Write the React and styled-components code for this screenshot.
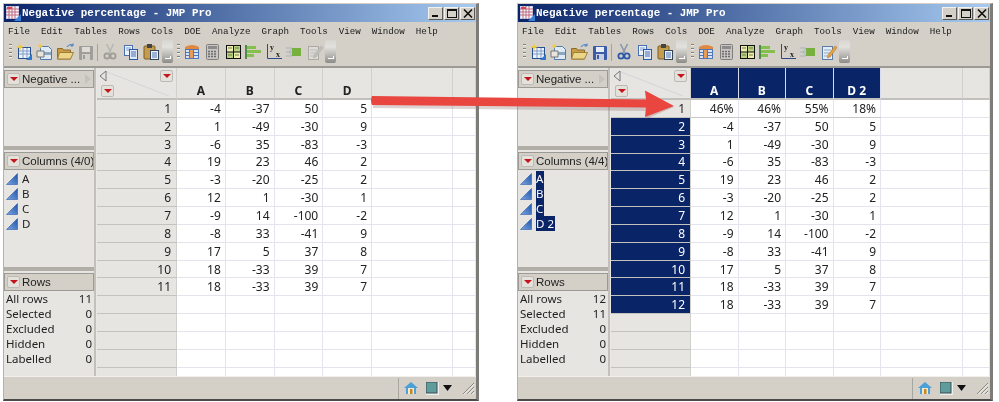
import React from "react";
import styled, { createGlobalStyle } from "styled-components";

const Global = createGlobalStyle`
  html, body { margin: 0; padding: 0; background: #fff; }
  * { box-sizing: border-box; }
  #root { width: 999px; height: 402px; overflow: hidden; }
`;

const Page = styled.div`
  position: relative;
  width: 999px;
  height: 402px;
  padding: 3px 0 0 3px;
  display: flex;
  gap: 38px;
  background: #fff;
  font-family: "Noto Sans", sans-serif;
  color: #222;
`;

const Frame = styled.div`
  width: 476px;
  height: 398px;
  display: flex;
  flex-direction: column;
  background: #d4d0c8;
  border-left: 1px solid #b4b2ac;
  border-right: 3px solid #7e7c78;
  border-bottom: 2px solid #4a4a48;
  border-top: 1px solid #d4d0c8;
  filter: blur(0.25px);
`;

const TitleBar = styled.div`
  height: 18px;
  flex: none;
  display: flex;
  align-items: center;
  padding: 0 1px 0 2px;
  background: linear-gradient(90deg, #0a246a 0%, #a6caf0 100%);
`;

const TitleText = styled.span`
  margin-left: 1px;
  flex: 1;
  font: bold 10.9px/18px "Liberation Mono", monospace;
  color: #fff;
  white-space: pre;
`;

const WinButtons = styled.div`
  display: flex;
  gap: 1px;
`;

const WinButton = styled.div`
  width: 15px;
  height: 13px;
  background: #d4d0c8;
  border: 1px solid;
  border-color: #f4f2ee #5a5a58 #5a5a58 #f4f2ee;
  display: flex;
  align-items: center;
  justify-content: center;
  & svg { display: block; }
`;

const MenuBar = styled.div`
  height: 19px;
  flex: none;
  display: flex;
  align-items: center;
  gap: 11px;
  padding: 1px 0 0 4px;
  font: 9.2px/18px "Liberation Mono", monospace;
  color: #1a1a1a;
`;

const ToolBar = styled.div`
  height: 27px;
  flex: none;
  display: flex;
  align-items: center;
  padding: 0 0 3px 5px;
  border-bottom: 2px solid #9c9a94;
`;

const Grip = styled.div`
  width: 3px;
  height: 16px;
  margin-right: 2px;
  background: repeating-linear-gradient(180deg, #807e78 0 1px, #f2f0ec 1px 2px, transparent 2px 4px);
`;

const ToolIcon = styled.div`
  width: 20.5px;
  height: 18px;
  display: flex;
  justify-content: center;
  opacity: ${(p) => (p.$dim ? 0.42 : 1)};
  filter: ${(p) => (p.$dim ? "grayscale(1)" : "none")};
  & svg { display: block; }
`;

const ToolSep = styled.div`
  width: 1px;
  height: 17px;
  margin: 0 2px 0 1px;
  background: #a5a39d;
`;

const Overflow = styled.div`
  width: 11px;
  height: 23px;
  margin: 0 4px 0 0;
  align-self: flex-end;
  position: relative;
  border-radius: 2px;
  background: linear-gradient(180deg, #d8d6d0 0%, #e2e1de 30%, #b4b2ae 70%, #8d8b88 100%);
  &::after {
    content: "";
    position: absolute;
    left: 3px;
    bottom: 4px;
    width: 5px;
    height: 2px;
    border-bottom: 1px solid #fff;
    border-right: 1px solid #fff;
  }
`;

const Body = styled.div`
  flex: 1;
  min-height: 0;
  display: flex;
`;

const Side = styled.div`
  width: 90px;
  flex: none;
  display: flex;
  flex-direction: column;
  background: #b0aea6;
  gap: 4px;
`;

const Panel = styled.div`
  height: ${(p) => p.$h}px;
  flex: ${(p) => (p.$grow ? 1 : "none")};
  padding-top: 2px;
  background: #e7e5e2;
`;

const PanelHead = styled.div`
  height: 18px;
  display: flex;
  align-items: center;
  gap: 2px;
  padding-left: 2px;
  background: #d4d0c8;
  border: 1px solid #9c9a94;
  font-family: "Liberation Sans", sans-serif;
  font-size: 11.5px;
  line-height: 16px;
  color: #222;
  white-space: nowrap;
  overflow: hidden;
`;

const HeadName = styled.span`
  flex: 1;
`;

const RedBtn = styled.span`
  width: 13px;
  height: 12px;
  flex: none;
  display: inline-flex;
  align-items: center;
  justify-content: center;
  border-radius: 2px;
  background: #e4e1db;
  border: 1px solid #bcbab4;
  &::after {
    content: "";
    border-left: 4px solid transparent;
    border-right: 4px solid transparent;
    border-top: 4px solid #c4141c;
  }
`;

const Chevron = styled.span`
  width: 0;
  height: 0;
  margin-right: 2px;
  border-top: 5px solid transparent;
  border-bottom: 5px solid transparent;
  border-left: 6px solid #c4c2bc;
`;

const ColList = styled.div`
  padding-top: 1px;
  display: flex;
  flex-direction: column;
`;

const ColRow = styled.div`
  height: 15px;
  display: flex;
  align-items: center;
  padding-left: 2px;
  font-size: 11.5px;
  gap: 3px;
  & svg { display: block; flex: none; }
`;

const ColName = styled.span`
  line-height: 15px;
  padding-right: 1px;
  white-space: pre;
  background: ${(p) => (p.$sel ? "#0a2468" : "transparent")};
  color: ${(p) => (p.$sel ? "#fff" : "#222")};
`;

const StatList = styled.div`
  padding: 0 2px;
  display: flex;
  flex-direction: column;
`;

const StatRow = styled.div`
  height: 15px;
  display: flex;
  justify-content: space-between;
  font-size: 11.5px;
  line-height: 15px;
`;

const Splitter = styled.div`
  width: 3px;
  flex: none;
  background: #c2c0b9;
  border-right: 1px solid #e9e8e6;
`;

const TableWrap = styled.div`
  flex: 1;
  min-width: 0;
  overflow: hidden;
  background: #fff;
  display: grid;
  grid-template-columns: 80px repeat(4, ${(p) => p.$col}px) ${(p) => p.$extra}px 1fr;
  grid-template-rows: 32px;
  grid-auto-rows: 17.85px;
`;

const Corner = styled.div`
  position: relative;
  background: #e7e5e2;
  border-right: 1px solid #d2d0cc;
  border-bottom: 2px solid #c2c0bc;
  overflow: hidden;
  & svg { position: absolute; left: 0; top: 0; }
`;

const CornerTop = styled(RedBtn)`
  position: absolute;
  right: 3px;
  top: 2px;
`;

const CornerBottom = styled(RedBtn)`
  position: absolute;
  left: 4px;
  bottom: 1px;
`;

const ColHead = styled.div`
  display: flex;
  align-items: flex-end;
  justify-content: center;
  font-size: 12px;
  font-weight: 700;
  line-height: 14px;
  white-space: pre;
  background: ${(p) => (p.$sel ? "#0a2468" : "#e7e5e2")};
  color: ${(p) => (p.$sel ? "#fff" : "#222")};
  border-right: 1px solid ${(p) => (p.$sel ? "#d8dcec" : "#d2d0cc")};
  border-bottom: 2px solid #c2c0bc;
`;

const RowHead = styled.div`
  display: flex;
  align-items: center;
  justify-content: flex-end;
  padding-right: 5px;
  font-size: 12px;
  background: ${(p) => (p.$sel ? "#0a2468" : "#e7e5e2")};
  color: ${(p) => (p.$sel ? "#fff" : "#222")};
  border-right: 1px solid #d2d0cc;
  border-bottom: 1px solid #c4c2bc;
`;

const Cell = styled.div`
  display: flex;
  align-items: center;
  justify-content: flex-end;
  padding-right: 4px;
  font-size: 12px;
  background: #fff;
  color: #222;
  border-right: 1px solid #e4e4ee;
  border-bottom: 1px solid ${(p) => (p.$strong ? "#c8c8cc" : "#e4e4ee")};
`;

const StatusBar = styled.div`
  height: 23px;
  flex: none;
  display: flex;
  align-items: center;
  justify-content: flex-end;
  gap: 8px;
  padding-right: 1px;
  border-top: 1px solid #f2f0ec;
  & svg { display: block; }
  & svg:nth-of-type(2) { margin-right: -4px; }
`;

const StatusSep = styled.div`
  width: 1px;
  height: 21px;
  margin-right: -3px;
  background: #a8a6a0;
`;

const ArrowLayer = styled.svg`
  position: absolute;
  left: 0;
  top: 0;
  pointer-events: none;
`;

const Min = () => (
  <svg width="10" height="9"><rect x="1" y="6" width="6" height="2" fill="#111" /></svg>
);
const Max = () => (
  <svg width="10" height="9"><rect x="0.5" y="0.5" width="9" height="8" fill="none" stroke="#111" /><rect x="0" y="0" width="10" height="2" fill="#111" /></svg>
);
const Close = () => (
  <svg width="10" height="9"><path d="M1 0.5 L9 8.5 M9 0.5 L1 8.5" stroke="#111" strokeWidth="1.6" /></svg>
);

const AppIcon = () => (
  <svg width="15" height="15" viewBox="0 0 15 15">
    <rect x="0.5" y="0.5" width="12" height="12" fill="#f4f4fa" stroke="#c8d4ec" />
    <path d="M0 3h13M0 6h13M0 9h13M3 0v13M6 0v13M9 0v13" stroke="#c06a80" />
    <rect x="1" y="1" width="5" height="2" fill="#d84848" />
    <path d="M15 8 L8 15 L15 15z" fill="#3a80d8" />
  </svg>
);

const icons = {
  newdata: (
    <>
      <rect x="3.5" y="4.5" width="12" height="11" fill="#eef2fa" stroke="#28508c" />
      <path d="M4 8h11M4 11h11M8 5v10M12 5v10" stroke="#7c9ccc" />
      <path d="M5 0 L6 3 L9 4 L6 5 L5 8 L4 5 L1 4 L4 3z" fill="#f4c83c" />
      <path d="M17 11 L11 17 L17 17z" fill="#2c78cc" />
    </>
  ),
  doc: (
    <>
      <path d="M4.5 3.5h8l3 3v10h-11z" fill="#dfeaf4" stroke="#4c7cac" />
      <rect x="4" y="9" width="11" height="3" fill="#8aa8c4" />
      <path d="M1 8h7v6h-7z" fill="#e8e6dc" stroke="#777" />
      <path d="M4 0 L5 2 L7 3 L5 4 L4 6 L3 4 L1 3 L3 2z" fill="#f0cc50" />
    </>
  ),
  open: (
    <>
      <path d="M1.5 5.5h5l1 1.5h7v9h-13z" fill="#c89c44" stroke="#8c6c2c" />
      <path d="M3.5 9.5h14l-3 6.5h-13z" fill="#ecd488" stroke="#a08038" />
      <path d="M11 4 Q14 0 17 3 M17 3 l-2.5 0 M17 3 l0 -2.4" stroke="#5a86c4" fill="none" strokeWidth="1.2" />
    </>
  ),
  save: (
    <>
      <rect x="2" y="3" width="14" height="14" rx="1" fill="#3c5ca8" />
      <rect x="5" y="4" width="8" height="5" fill="#e8eef8" />
      <rect x="5" y="11" width="8" height="6" fill="#c8d0e0" />
      <rect x="6" y="12" width="2" height="4" fill="#3c5ca8" />
    </>
  ),
  cut: (
    <>
      <path d="M5.5 1 L10 10 M12.5 1 L8 10" stroke="#8896a8" strokeWidth="1.6" fill="none" />
      <circle cx="6" cy="13" r="2.6" fill="none" stroke="#2c5aa8" strokeWidth="1.8" />
      <circle cx="12" cy="13" r="2.6" fill="none" stroke="#2c5aa8" strokeWidth="1.8" />
    </>
  ),
  copy: (
    <>
      <rect x="2.5" y="2.5" width="8" height="10" fill="#eef3fa" stroke="#4a70b4" />
      <path d="M4 5h5M4 7h5" stroke="#7c9ccc" />
      <rect x="7.5" y="6.5" width="8" height="10" fill="#dfe9f8" stroke="#2c58a8" />
      <path d="M9 9h5M9 11h5M9 13h5" stroke="#4a70b4" />
    </>
  ),
  paste: (
    <>
      <rect x="2" y="3" width="11" height="13" rx="1" fill="#c49c4c" stroke="#7c5c24" />
      <rect x="5" y="1" width="5" height="4" fill="#444" />
      <rect x="8.5" y="7.5" width="8" height="9" fill="#eef3fa" stroke="#345" />
      <path d="M10 10h5M10 12h5M10 14h5" stroke="#4a70b4" />
    </>
  ),
  table: (
    <>
      <path d="M2 4 Q9 0 16 4 v3h-14z" fill="#e08840" />
      <rect x="2.5" y="6.5" width="13" height="9" fill="#d8e4f4" stroke="#5078b8" />
      <path d="M3 9.5h12M3 12.5h12M6.5 7v8M10.5 7v8" stroke="#5078b8" />
      <rect x="7" y="7" width="3" height="8" fill="#e89c58" />
    </>
  ),
  calc: (
    <>
      <rect x="3.5" y="1.5" width="12" height="15" rx="1" fill="#c8c6c4" stroke="#807e7c" />
      <rect x="5" y="3" width="9" height="3" fill="#8c8a8a" />
      <path d="M5 8.5h9M5 11h9M5 13.5h9" stroke="#6c6a6a" strokeWidth="1.4" strokeDasharray="2 1" />
    </>
  ),
  grid: (
    <>
      <rect x="2" y="2" width="15" height="14" fill="#111" />
      <rect x="3" y="3" width="6" height="5.5" fill="#f0ecb0" />
      <rect x="10" y="3" width="6" height="5.5" fill="#b8d080" />
      <rect x="3" y="9.5" width="6" height="5.5" fill="#b8d080" />
      <rect x="10" y="9.5" width="6" height="5.5" fill="#f0ecb0" />
      <path d="M4 5h4M11 5h4M4 12h4M11 12h4" stroke="#668040" />
    </>
  ),
  bars: (
    <>
      <rect x="1" y="2" width="2" height="14" fill="#4c8c4c" />
      <rect x="3" y="3" width="9" height="3" fill="#86c04c" />
      <rect x="3" y="7" width="14" height="3" fill="#86c04c" />
      <rect x="3" y="11" width="7" height="3" fill="#86c04c" />
    </>
  ),
  yx: (
    <>
      <path d="M2.5 1v14.5H17" stroke="#2c4a8c" fill="none" />
      <text x="5" y="7" fontFamily="Liberation Serif, serif" fontWeight="700" fontSize="8" fill="#222">y</text>
      <text x="11" y="14" fontFamily="Liberation Serif, serif" fontWeight="700" fontSize="8" fill="#222">x</text>
    </>
  ),
  tile: (
    <>
      <path d="M1 5h6M1 9h6M1 13h6M7 5l-3 4 3 4" stroke="#a8b4c4" fill="none" />
      <rect x="7" y="5" width="9" height="8" fill="#78b040" />
    </>
  ),
  edit: (
    <>
      <rect x="2.5" y="3.5" width="10" height="13" fill="#e4ecf8" stroke="#5c7ca8" />
      <path d="M4 7h7M4 10h7M4 13h7" stroke="#90a8c8" />
      <path d="M8 12 L15 3 L17 4.500 L10 14 L7.500 15z" fill="#e8a040" stroke="#a07028" strokeWidth="0.5" />
    </>
  ),
};

const Tool = ({ name, dim }) => (
  <ToolIcon $dim={dim}>
    <svg width="18" height="18" viewBox="0 0 18 18">{icons[name]}</svg>
  </ToolIcon>
);

const ColIcon = () => (
  <svg width="13" height="12" viewBox="0 0 13 12">
    <defs>
      <linearGradient id="tri" x1="0" y1="1" x2="1" y2="0">
        <stop offset="0" stopColor="#7aa4dc" />
        <stop offset="1" stopColor="#1c54ac" />
      </linearGradient>
    </defs>
    <path d="M0.5 11.500 L11.500 0.500 L11.500 11.500z" fill="url(#tri)" stroke="#2a5cb0" strokeWidth="0.6" />
  </svg>
);

const MENUS = ["File", "Edit", "Tables", "Rows", "Cols", "DOE", "Analyze", "Graph", "Tools", "View", "Window", "Help"];
const STAT_LABELS = ["All rows", "Selected", "Excluded", "Hidden", "Labelled"];
const BASE = [
  [-4, -37, 50, 5], [1, -49, -30, 9], [-6, 35, -83, -3], [19, 23, 46, 2], [-3, -20, -25, 2], [12, 1, -30, 1],
  [-9, 14, -100, -2], [-8, 33, -41, 9], [17, 5, 37, 8], [18, -33, 39, 7], [18, -33, 39, 7],
];

const TOTAL_ROWS = 16;

function Table({ col, extra, heads, selected, rows }) {
  const blanks = Array.from({ length: TOTAL_ROWS - rows.length });
  return (
    <TableWrap $col={col} $extra={extra}>
      <Corner>
        <svg width="80" height="31"><path d="M10 4 L72 28" stroke="#d6d4d8" /><path d="M9 3 L3 8 L9 13z" fill="#e7e5e2" stroke="#77757a" /></svg>
        <CornerTop />
        <CornerBottom />
      </Corner>
      {heads.map((h) => (
        <ColHead key={h} $sel={selected}>{h}</ColHead>
      ))}
      <ColHead />
      <ColHead />
      {rows.map((r, i) => {
        const sel = selected && i > 0;
        return (
          <React.Fragment key={i}>
            <RowHead $sel={sel}>{i + 1}</RowHead>
            {r.map((v, j) => (
              <Cell key={j} $strong={selected && i === 0}>{v}</Cell>
            ))}
            <Cell />
            <Cell />
          </React.Fragment>
        );
      })}
      {blanks.map((_, i) => (
        <React.Fragment key={i}>
          <RowHead />
          <Cell /><Cell /><Cell /><Cell /><Cell /><Cell />
        </React.Fragment>
      ))}
    </TableWrap>
  );
}

function JmpWindow({ active, colsLabel, cols, stats, table }) {
  return (
    <Frame>
      <TitleBar>
        <AppIcon />
        <TitleText>Negative percentage - JMP Pro</TitleText>
        <WinButtons>
          <WinButton><Min /></WinButton>
          <WinButton><Max /></WinButton>
          <WinButton><Close /></WinButton>
        </WinButtons>
      </TitleBar>
      <MenuBar>
        {MENUS.map((m) => <span key={m}>{m}</span>)}
      </MenuBar>
      <ToolBar>
        <Grip />
        <Tool name="newdata" />
        <Tool name="doc" />
        <Tool name="open" />
        <Tool name="save" dim={!active} />
        <ToolSep />
        <Tool name="cut" dim={!active} />
        <Tool name="copy" />
        <Tool name="paste" />
        <Overflow />
        <Grip />
        <Tool name="table" />
        <Tool name="calc" />
        <Tool name="grid" />
        <Tool name="bars" />
        <Tool name="yx" />
        <Tool name="tile" />
        <Tool name="edit" dim={!active} />
        <Overflow />
      </ToolBar>
      <Body>
        <Side>
          <Panel $h={78}>
            <PanelHead><RedBtn /><HeadName>Negative ...</HeadName><Chevron /></PanelHead>
          </Panel>
          <Panel $h={117}>
            <PanelHead><RedBtn /><HeadName>{colsLabel}</HeadName></PanelHead>
            <ColList>
              {cols.map((c) => (
                <ColRow key={c}><ColIcon /><ColName $sel={active}>{c}</ColName></ColRow>
              ))}
            </ColList>
          </Panel>
          <Panel $grow>
            <PanelHead><RedBtn /><HeadName>Rows</HeadName></PanelHead>
            <StatList>
              {STAT_LABELS.map((l, i) => (
                <StatRow key={l}><span>{l}</span><span>{stats[i]}</span></StatRow>
              ))}
            </StatList>
          </Panel>
        </Side>
        <Splitter />
        <Table {...table} />
      </Body>
      <StatusBar>
        <StatusSep />
        <svg width="14" height="14" viewBox="0 0 14 14">
          <path d="M7 1 L14 7 L12 7 L12 13 L2 13 L2 7 L0 7z" fill="#4ca0d8" />
          <rect x="4" y="7" width="6" height="6" fill="#f0e8d0" />
          <rect x="6" y="8" width="2.500" height="5" fill="#c88820" />
        </svg>
        <svg width="13" height="13" viewBox="0 0 13 13">
          <rect x="0" y="0" width="13" height="13" fill="#eeeeea" />
          <rect x="0" y="0" width="11" height="11" fill="#5f9c9c" stroke="#3a4c50" strokeWidth="1" />
        </svg>
        <svg width="10" height="6" viewBox="0 0 10 6"><path d="M0 0h9L4.500 6z" fill="#111" /></svg>
        <svg width="14" height="14" viewBox="0 0 14 14">
          <path d="M13 2 L2 13 M13 6 L6 13 M13 10 L10 13" stroke="#8a8882" strokeWidth="1" />
          <path d="M13.500 3 L3 13.500 M13.500 7 L7 13.500 M13.500 11 L11 13.500" stroke="#f6f4f0" strokeWidth="1" />
        </svg>
      </StatusBar>
    </Frame>
  );
}

export default function App() {
  return (
    <Page>
      <Global />
      <JmpWindow
        colsLabel="Columns (4/0)"
        cols={["A", "B", "C", "D"]}
        stats={[11, 0, 0, 0, 0]}
        table={{ col: 48.75, extra: 81, heads: ["A", "B", "C", "D"], selected: false, rows: BASE }}
      />
      <JmpWindow
        active
        colsLabel="Columns (4/4)"
        cols={["A", "B", "C", "D 2"]}
        stats={[12, 11, 0, 0, 0]}
        table={{
          col: 47.5,
          extra: 82,
          heads: ["A", "B", "C", "D 2"],
          selected: true,
          rows: [["46%", "46%", "55%", "18%"], ...BASE],
        }}
      />
      <ArrowLayer width="999" height="402" viewBox="0 0 999 402">
        <path d="M373 100 L646 104 L646 92 L674 107 L646 119 L646 111 L373 108z" fill="#8a6a66" opacity="0.3" />
        <path d="M372 96 Q370 100 372 105 L646 107.500 L645 117 L674 106 L645 90.500 L646 99.500z" fill="#e8463e" />
      </ArrowLayer>
    </Page>
  );
}
